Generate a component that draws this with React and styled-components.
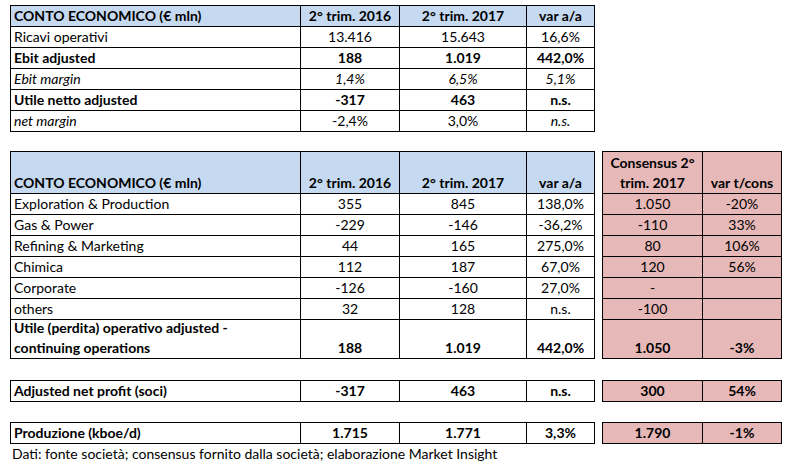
import React from "react";
import styled, { createGlobalStyle } from "styled-components";

const GlobalStyle = createGlobalStyle`
  html, body {
    margin: 0;
    padding: 0;
    background: #fff;
  }
`;

const BLUE = "#c5d9f1";
const PINK = "#e6b8b7";

const Page = styled.div`
  padding: 5px 0 0 10px;
  font-family: Lato, "Liberation Sans", sans-serif;
  font-size: 14px;
  color: #000;
`;

const Block = styled.div`
  display: flex;
  gap: 7px;
  margin-top: ${(p) => p.$mt || 0}px;
`;

const Grid = styled.div`
  display: grid;
  grid-template-columns: ${(p) => p.$cols};
  border-top: 1px solid #000;
  border-left: 1px solid #000;
  background: ${(p) => p.$bg || "#fff"};
`;

const Cell = styled.div`
  box-sizing: border-box;
  height: ${(p) => p.$h}px;
  border-right: 1px solid #000;
  border-bottom: 1px solid #000;
  background: ${(p) => p.$bg || "transparent"};
  display: flex;
  align-items: flex-end;
  justify-content: ${(p) => (p.$left ? "flex-start" : "center")};
  text-align: ${(p) => (p.$left ? "left" : "center")};
  padding: 0 3px;
  line-height: 20px;
  white-space: pre-line;
  font-weight: ${(p) => (p.$bold ? 700 : 400)};
  font-style: ${(p) => (p.$italic ? "italic" : "normal")};
`;

const Note = styled.div`
  padding-left: 2px;
  line-height: 20px;
`;

const MAIN_COLS = "290px 99px 127px 68px";
const CONS_COLS = "100px 79px";

// b = bold, i = italic for the whole row; ci = italic for the values only
const first = [
  { label: "Ricavi operativi", v: ["13.416", "15.643", "16,6%"] },
  { label: "Ebit adjusted", v: ["188", "1.019", "442,0%"], b: true },
  { label: "Ebit margin", v: ["1,4%", "6,5%", "5,1%"], i: true, ci: [true, true, true] },
  { label: "Utile netto adjusted", v: ["-317", "463", "n.s."], b: true },
  { label: "net margin", v: ["-2,4%", "3,0%", "n.s."], i: true, ci: [false, false, true] },
];

const segments = [
  { label: "Exploration & Production", v: ["355", "845", "138,0%"], c: ["1.050", "-20%"] },
  { label: "Gas & Power", v: ["-229", "-146", "-36,2%"], c: ["-110", "33%"] },
  { label: "Refining & Marketing", v: ["44", "165", "275,0%"], c: ["80", "106%"] },
  { label: "Chimica", v: ["112", "187", "67,0%"], c: ["120", "56%"] },
  { label: "Corporate", v: ["-126", "-160", "27,0%"], c: ["-", ""] },
  { label: "others", v: ["32", "128", "n.s."], c: ["-100", ""] },
];

function Header({ h }) {
  return (
    <>
      <Cell $h={h} $bg={BLUE} $left $bold>CONTO ECONOMICO (€ mln)</Cell>
      <Cell $h={h} $bg={BLUE} $bold>2° trim. 2016</Cell>
      <Cell $h={h} $bg={BLUE} $bold>2° trim. 2017</Cell>
      <Cell $h={h} $bg={BLUE} $bold>var a/a</Cell>
    </>
  );
}

function Row({ row, h = 21 }) {
  return (
    <>
      <Cell $h={h} $left $bold={row.b} $italic={row.i}>{row.label}</Cell>
      {row.v.map((val, k) => (
        <Cell key={k} $h={h} $bold={row.b} $italic={row.ci ? row.ci[k] : false}>
          {val}
        </Cell>
      ))}
    </>
  );
}

function ConsRow({ vals, bold, h = 21 }) {
  return (
    <>
      {vals.map((val, k) => (
        <Cell key={k} $h={h} $bold={bold}>{val}</Cell>
      ))}
    </>
  );
}

export default function App() {
  return (
    <>
      <GlobalStyle />
      <Page>
        <Block>
          <Grid $cols={MAIN_COLS}>
            <Header h={21} />
            {first.map((r) => (
              <Row key={r.label} row={r} />
            ))}
          </Grid>
        </Block>

        <Block $mt={19}>
          <Grid $cols={MAIN_COLS}>
            <Header h={42} />
            {segments.map((r) => (
              <Row key={r.label} row={r} />
            ))}
            <Row
              h={39}
              row={{
                label: "Utile (perdita) operativo adjusted -\ncontinuing operations",
                v: ["188", "1.019", "442,0%"],
                b: true,
              }}
            />
          </Grid>
          <Grid $cols={CONS_COLS} $bg={PINK}>
            <Cell $h={42} $bold>{"Consensus 2°\ntrim. 2017"}</Cell>
            <Cell $h={42} $bold>var t/cons</Cell>
            {segments.map((r) => (
              <ConsRow key={r.label} vals={r.c} />
            ))}
            <ConsRow h={39} vals={["1.050", "-3%"]} bold />
          </Grid>
        </Block>

        <Block $mt={21}>
          <Grid $cols={MAIN_COLS}>
            <Row row={{ label: "Adjusted net profit (soci)", v: ["-317", "463", "n.s."], b: true }} />
          </Grid>
          <Grid $cols={CONS_COLS} $bg={PINK}>
            <ConsRow vals={["300", "54%"]} bold />
          </Grid>
        </Block>

        <Block $mt={20}>
          <Grid $cols={MAIN_COLS}>
            <Row row={{ label: "Produzione (kboe/d)", v: ["1.715", "1.771", "3,3%"], b: true }} />
          </Grid>
          <Grid $cols={CONS_COLS} $bg={PINK}>
            <ConsRow vals={["1.790", "-1%"]} bold />
          </Grid>
        </Block>

        <Note>Dati: fonte società; consensus fornito dalla società; elaborazione Market Insight</Note>
      </Page>
    </>
  );
}
